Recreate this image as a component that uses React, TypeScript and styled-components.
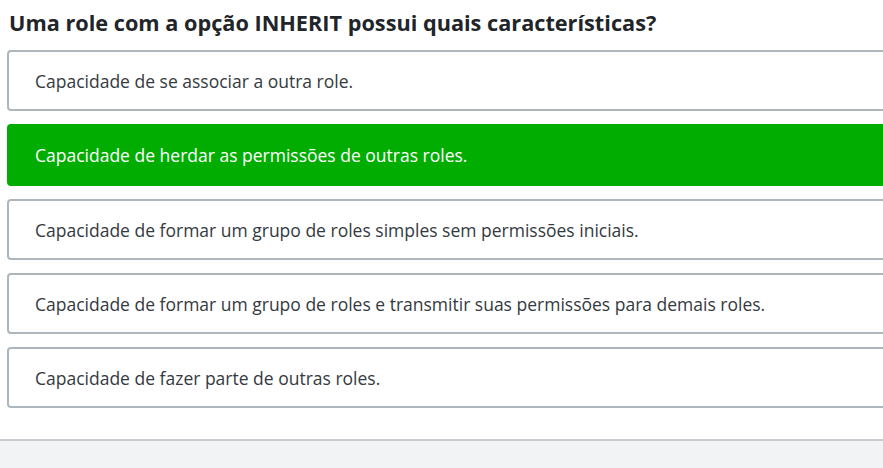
import React from "react";
import styled, { createGlobalStyle } from "styled-components";

const Global = createGlobalStyle`
  html, body { margin: 0; padding: 0; background: #ffffff; overflow: hidden; }
  body { font-family: "Open Sans", "Noto Sans", sans-serif; }
`;

const Page = styled.div`
  width: 883px;
  height: 468px;
  display: flex;
  flex-direction: column;
  overflow: hidden;
`;

const Content = styled.div`
  padding: 8px 0 0 7px;
  height: 439px;
  box-sizing: border-box;
`;

const Title = styled.h2`
  margin: 0 0 13px 2px;
  font-size: 21.7px;
  line-height: 29px;
  font-weight: 700;
  color: #212529;
`;

const Options = styled.div`
  width: 900px;
  display: flex;
  flex-direction: column;
  gap: 13px;
`;

const Option = styled.div<{ $correct?: boolean }>`
  box-sizing: border-box;
  height: ${(p) => (p.$correct ? "62px" : "61px")};
  display: flex;
  align-items: center;
  padding-left: ${(p) => (p.$correct ? "28px" : "26px")};
  border-radius: 4px;
  font-size: 17.5px;
  color: ${(p) => (p.$correct ? "#ffffff" : "#343a40")};
  background: ${(p) => (p.$correct ? "#00ad00" : "#ffffff")};
  border: ${(p) => (p.$correct ? "none" : "2px solid #adb5bd")};
`;

const Footer = styled.div`
  flex: 1;
  background: #f2f3f5;
  border-top: 2px solid #c8cbd0;
`;

const options = [
  "Capacidade de se associar a outra role.",
  "Capacidade de herdar as permissões de outras roles.",
  "Capacidade de formar um grupo de roles simples sem permissões iniciais.",
  "Capacidade de formar um grupo de roles e transmitir suas permissões para demais roles.",
  "Capacidade de fazer parte de outras roles.",
];

export default function App() {
  return (
    <Page>
      <Global />
      <Content>
        <Title>Uma role com a opção INHERIT possui quais características?</Title>
        <Options>
          {options.map((o, i) => (
            <Option key={i} $correct={i === 1}>
              {o}
            </Option>
          ))}
        </Options>
      </Content>
      <Footer />
    </Page>
  );
}
